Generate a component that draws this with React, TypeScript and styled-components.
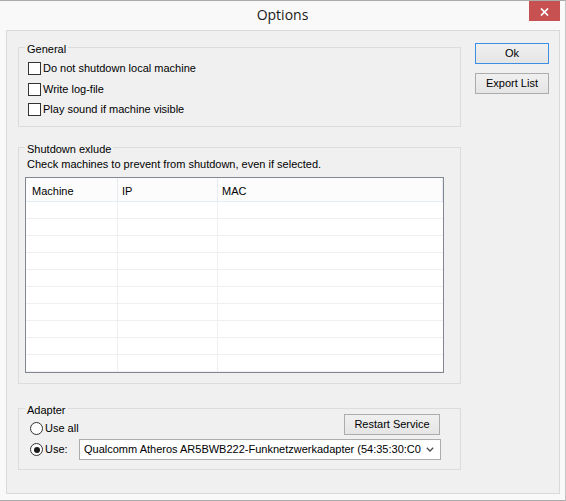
import * as React from 'react';
import styled, { createGlobalStyle } from 'styled-components';

const checkOptions = ['Do not shutdown local machine', 'Write log-file', 'Play sound if machine visible'];
const columns = ['Machine', 'IP', 'MAC'];
const emptyRows = Array.from({ length: 10 }, (_, i) => i);

const App = () => {
	return (
		<>
			<GlobalStyle />
			<Window>
				<TitleBar>
					<Title>Options</Title>
					<CloseButton aria-label="Close">
						<svg width="9" height="8" viewBox="0 0 9 8">
							<path d="M1 0.5 L8 7.5 M8 0.5 L1 7.5" stroke="#ffffff" strokeWidth="1.7" fill="none" />
						</svg>
					</CloseButton>
				</TitleBar>
				<Client>
					<MainColumn>
						<Group $mb={20}>
							<Caption>General</Caption>
							<CheckList>
								{checkOptions.map((label) => (
									<CheckRow key={label}>
										<CheckBox />
										<span>{label}</span>
									</CheckRow>
								))}
							</CheckList>
						</Group>

						<Group $mb={24}>
							<Caption>Shutdown exlude</Caption>
							<Hint>Check machines to prevent from shutdown, even if selected.</Hint>
							<ListBox>
								<ListHeader>
									{columns.map((c) => (
										<HeaderCell key={c}>{c}</HeaderCell>
									))}
								</ListHeader>
								{emptyRows.map((r) => (
									<ListRow key={r}>
										<Cell />
										<Cell />
										<Cell />
									</ListRow>
								))}
							</ListBox>
						</Group>

						<Group $mb={0}>
							<Caption $tight>Adapter</Caption>
							<AdapterBody>
								<RadioOption $align="end">
									<RadioDot />
									<span>Use all</span>
								</RadioOption>
								<Button $width={96} $place="end">
									Restart Service
								</Button>
								<RadioOption $align="center">
									<RadioDot $checked />
									<span>Use:</span>
								</RadioOption>
								<Combo>
									<ComboText>Qualcomm Atheros AR5BWB222-Funknetzwerkadapter (54:35:30:C0:A8:2F)</ComboText>
									<ComboArrow>
										<svg width="8" height="5" viewBox="0 0 8 5">
											<path d="M0.8 0.8 L4 4 L7.2 0.8" stroke="#4a4a4a" strokeWidth="1.3" fill="none" />
										</svg>
									</ComboArrow>
								</Combo>
							</AdapterBody>
						</Group>
					</MainColumn>

					<SideColumn>
						<Button $width={74} $default>
							Ok
						</Button>
						<Button $width={74}>Export List</Button>
					</SideColumn>
				</Client>
			</Window>
		</>
	);
};

export default App;

const GlobalStyle = createGlobalStyle`
	html, body {
		margin: 0;
		padding: 0;
		background: #ffffff;
	}
	body {
		font-family: "Liberation Sans", Arial, sans-serif;
		font-size: 11px;
		color: #000000;
	}
`;

const Window = styled.div`
	width: 566px;
	height: 501px;
	box-sizing: border-box;
	background: #f9f9f9;
	border-top: 1px solid #ababab;
	border-bottom: 1px solid #ababab;
	border-right: 1px solid #c4c4c4;
	display: flex;
	flex-direction: column;
`;

const TitleBar = styled.div`
	height: 29px;
	display: grid;
	grid-template-columns: 1fr auto 1fr;
	align-items: start;
`;

const Title = styled.div`
	grid-column: 2;
	padding-top: 4px;
	font-family: "Open Sans", "Noto Sans", sans-serif;
	font-size: 14px;
	line-height: 20px;
	color: #1a1a1a;
`;

const CloseButton = styled.div`
	grid-column: 3;
	justify-self: end;
	width: 31px;
	height: 20px;
	margin-right: 5px;
	background: #c75050;
	display: flex;
	align-items: center;
	justify-content: center;
	padding-top: 2px;
	box-sizing: border-box;
`;

const Client = styled.div`
	height: 464px;
	margin: 0 5px 0 6px;
	box-sizing: border-box;
	border: 1px solid #d9d9d9;
	background: #f0f0f0;
	display: flex;
	padding-left: 11px;
`;

const MainColumn = styled.div`
	width: 443px;
	padding-top: 16px;
	display: flex;
	flex-direction: column;
`;

const SideColumn = styled.div`
	margin-left: 14px;
	padding-top: 12px;
	display: flex;
	flex-direction: column;
	gap: 9px;
`;

const Group = styled.div<{ $mb: number }>`
	border: 1px solid #dcdcdc;
	display: flex;
	flex-direction: column;
	margin-bottom: ${(p) => p.$mb}px;
`;

const Caption = styled.div<{ $tight?: boolean }>`
	align-self: flex-start;
	margin: -5px 0 ${(p) => (p.$tight ? '-3px' : '0')} 6px;
	padding: 0 2px;
	line-height: 13px;
	background: #f0f0f0;
`;

const CheckList = styled.div`
	display: flex;
	flex-direction: column;
	gap: 7.5px;
	padding: 6px 0 10px 9px;
`;

const CheckRow = styled.label`
	display: flex;
	align-items: center;
	gap: 2px;
	line-height: 13px;
	white-space: nowrap;
`;

const CheckBox = styled.span`
	width: 13px;
	height: 13px;
	box-sizing: border-box;
	border: 1px solid #333333;
	background: #ffffff;
	flex: none;
`;

const Hint = styled.div`
	margin: 2px 0 0 8px;
	line-height: 13px;
`;

const ListBox = styled.div`
	margin: 6px 16px 10px 6px;
	height: 196px;
	box-sizing: border-box;
	border: 1px solid #828790;
	background: #ffffff;
	overflow: hidden;
`;

const ListHeader = styled.div`
	display: grid;
	grid-template-columns: 92px 100px 1fr;
	height: 24px;
	box-sizing: border-box;
	border-bottom: 1px solid #e3ecf7;
	background: #fcfcfc;
`;

const HeaderCell = styled.div`
	padding: 7px 0 0 4px;
	line-height: 13px;
	border-right: 1px solid #e6ebf1;
	&:first-child {
		padding-left: 6px;
	}
`;

const ListRow = styled.div`
	display: grid;
	grid-template-columns: 92px 100px 1fr;
	height: 17px;
	box-sizing: border-box;
	border-bottom: 1px solid #efefef;
`;

const Cell = styled.div`
	border-right: 1px solid #efefef;
	&:last-child {
		border-right: none;
	}
`;

const AdapterBody = styled.div`
	display: grid;
	grid-template-columns: 49px 1fr;
	grid-template-rows: 21px 21px;
	row-gap: 4px;
	padding: 0 19px 9px 11px;
`;

const RadioOption = styled.label<{ $align: 'end' | 'center' }>`
	align-self: ${(p) => p.$align};
	display: flex;
	align-items: center;
	gap: 2px;
	line-height: 13px;
	white-space: nowrap;
`;

const RadioDot = styled.span<{ $checked?: boolean }>`
	width: 13px;
	height: 13px;
	box-sizing: border-box;
	border: 1px solid #333333;
	border-radius: 50%;
	background: #ffffff;
	display: flex;
	align-items: center;
	justify-content: center;
	flex: none;
	&::after {
		content: '';
		display: ${(p) => (p.$checked ? 'block' : 'none')};
		width: 6px;
		height: 6px;
		border-radius: 50%;
		background: #1a1a1a;
	}
`;

const Button = styled.button<{ $width: number; $default?: boolean; $place?: string }>`
	width: ${(p) => p.$width}px;
	height: 21px;
	box-sizing: border-box;
	padding: 0;
	justify-self: ${(p) => p.$place || 'auto'};
	margin-right: ${(p) => (p.$place === 'end' ? '1px' : '0')};
	border: 1px solid ${(p) => (p.$default ? '#3c8ee5' : '#acacac')};
	background: linear-gradient(#f0f0f0, #e5e5e5);
	font-family: inherit;
	font-size: 11px;
	color: #000000;
	line-height: 13px;
`;

const Combo = styled.div`
	width: 362px;
	height: 21px;
	box-sizing: border-box;
	border: 1px solid #acacac;
	background: #ffffff;
	display: flex;
	align-items: center;
`;

const ComboText = styled.div`
	flex: 1;
	padding-left: 4px;
	overflow: hidden;
	white-space: nowrap;
	line-height: 13px;
`;

const ComboArrow = styled.div`
	width: 18px;
	flex: none;
	display: flex;
	align-items: center;
	justify-content: center;
	padding-right: 1px;
`;
